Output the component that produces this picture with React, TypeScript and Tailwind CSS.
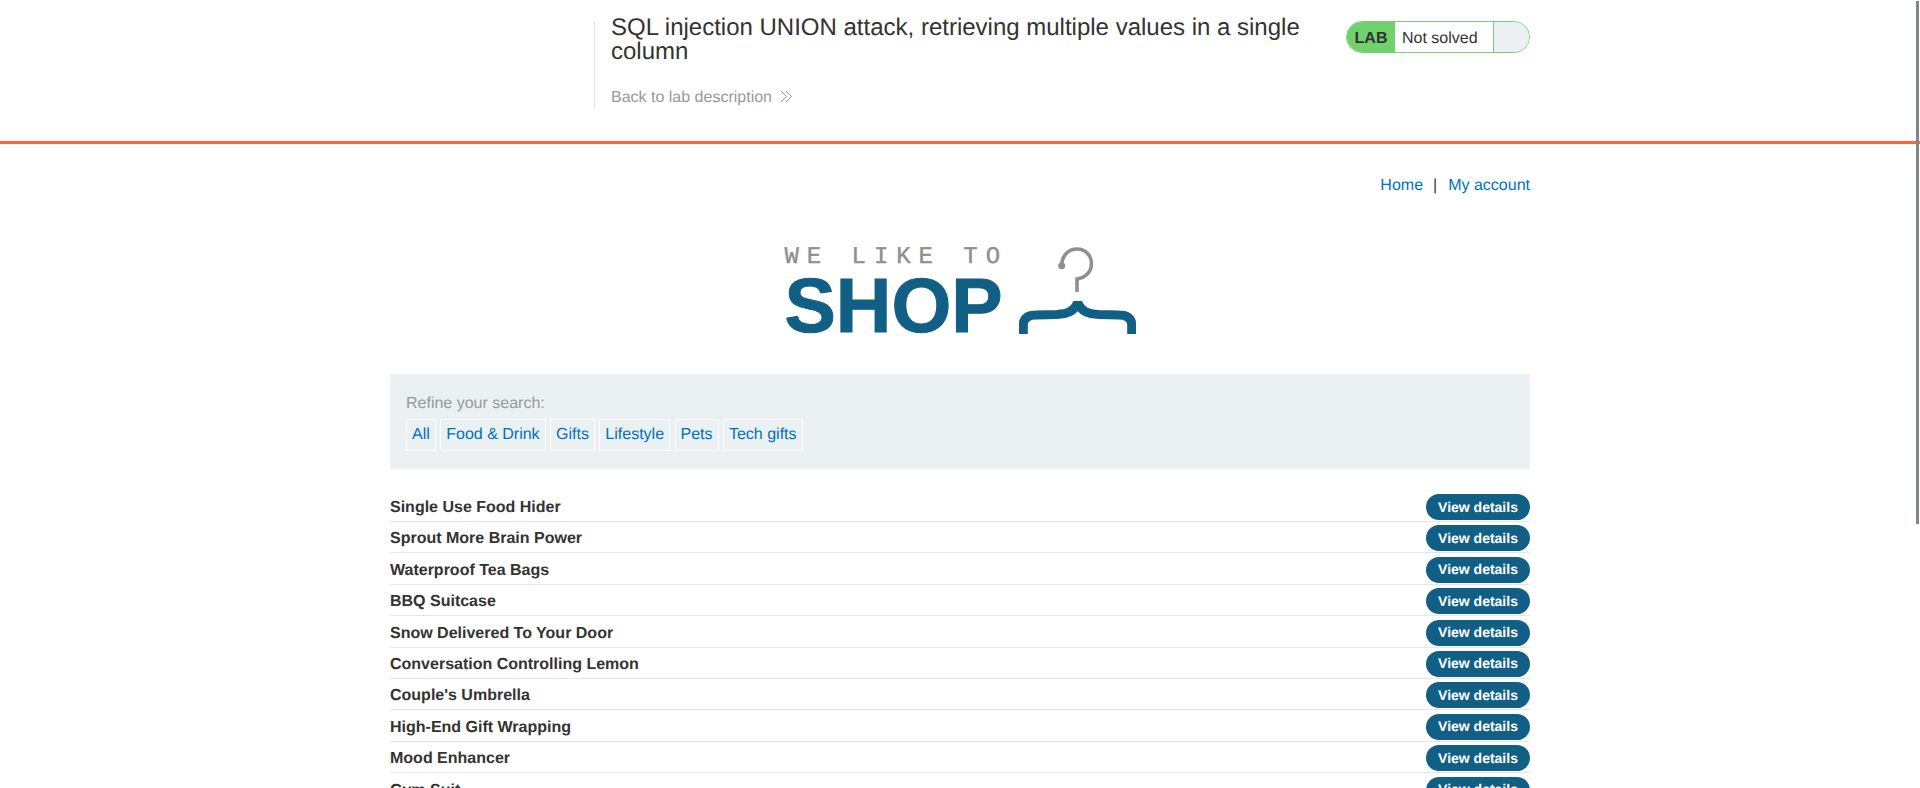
const products = [
  "Single Use Food Hider",
  "Sprout More Brain Power",
  "Waterproof Tea Bags",
  "BBQ Suitcase",
  "Snow Delivered To Your Door",
  "Conversation Controlling Lemon",
  "Couple's Umbrella",
  "High-End Gift Wrapping",
  "Mood Enhancer",
  "Gym Suit",
];
const filters = ["All", "Food & Drink", "Gifts", "Lifestyle", "Pets", "Tech gifts"];

function Hanger() {
  return (
    <svg width="117" height="87" viewBox="0 0 117 87" className="ml-[10.5px] shrink-0">
      <circle cx="42.7" cy="18.7" r="3.5" fill="#8f8f8f" />
      <path d="M42.7 18.7 C42.7 9 49 2 58 2 C66.5 2 72.5 8.5 72.5 16.5 C72.5 25 66 31 58 32 L58 45" fill="none" stroke="#8f8f8f" strokeWidth="3.6" />
      <path d="M4.3 87 L4.3 78 C4.3 71 9 68 17 68 L38 67.5 C49 67 55 64 58.7 56 C62.5 64 68 67 80 67.5 L100 68 C108 68 112.7 71 112.7 78 L112.7 87" fill="none" stroke="#115f84" strokeWidth="9" strokeLinejoin="bevel" />
    </svg>
  );
}

export default function App() {
  return (
    <div className="relative h-screen overflow-hidden bg-white text-[16px] text-[#333] font-['Liberation_Sans',Arial,sans-serif] [text-rendering:geometricPrecision]">
      <div className="absolute right-[1px] top-[1px] h-[523px] w-[3px] bg-[#808585]" />
      <header className="h-[144px] border-b-[3px] border-[#ff6633]">
        <div className="mx-auto w-[1140px] pt-[21px] pl-[204px] flex justify-between">
          <div className="w-[720px] h-[87px] border-l border-[#e6e6e6] pl-[16px]">
            <h2 className="text-[24px] leading-[24px] -mt-[5px]">
              SQL injection UNION attack, retrieving multiple values in a single column
            </h2>
            <a className="mt-[22px] flex items-center text-[#999]">
              Back to lab description
              <svg width="13" height="13" viewBox="0 0 13 13" className="ml-[8px] mb-[3px]" fill="none" stroke="#999" strokeWidth="1">
                <path d="M1 1 L6.5 6.5 L1 12 M6 1 L11.5 6.5 L6 12" />
              </svg>
            </a>
          </div>
          <div className="flex h-[32px] w-[184px] overflow-hidden rounded-full border border-[#70d16d]">
            <div className="flex w-[48px] items-center justify-center bg-[#70d16d] pt-[3px] font-bold">LAB</div>
            <div className="flex w-[98px] items-center pl-[7px] pt-[3px]">Not solved</div>
            <div className="flex-1 border-l border-[#70d16d] bg-[#ebf0f2]" />
          </div>
        </div>
      </header>
      <main className="mx-auto w-[1140px]">
        <nav className="flex justify-end pt-[33px] leading-[18px] text-[#0071bc]">
          <a>Home</a>
          <span className="ml-[10px] mr-[11px] text-[#333]">|</span>
          <a>My account</a>
        </nav>
        <div className="mt-[51px] flex justify-center">
          <div className="flex items-end">
            <div className="flex flex-col">
              <div className="font-['Liberation_Mono',monospace] text-[24px] leading-[24px] tracking-[7.95px] text-[#8f8f8f] [-webkit-text-stroke:0.4px_#8f8f8f]">WE LIKE TO</div>
              <div className="mt-[9px] text-[77px] leading-[55px] font-bold text-[#115f84] [-webkit-text-stroke:1px_#115f84]">SHOP</div>
            </div>
            <Hanger />
          </div>
        </div>
        <section className="mt-[40px] h-[95px] bg-[#ebf0f2] px-[16px] pt-[21px]">
          <div className="leading-[18px] text-[#999]">Refine your search:</div>
          <div className="mt-[6px] flex gap-[4.45px]">
            {filters.map((f) => (
              <a key={f} className="flex h-[32px] items-center border border-white px-[5px] text-[#0071bc]">{f}</a>
            ))}
          </div>
        </section>
        <ul className="mt-[25px]">
          {products.map((p) => (
            <li key={p} className="mb-[3.4px] flex h-[28px] items-start justify-between border-b border-[#e6e6e6] font-bold">
              <span className="leading-[27px]">{p}</span>
              <a className="flex h-[26px] w-[104px] items-center justify-center rounded-full bg-[#115f84] text-[14px] text-white">View details</a>
            </li>
          ))}
        </ul>
      </main>
    </div>
  );
}
